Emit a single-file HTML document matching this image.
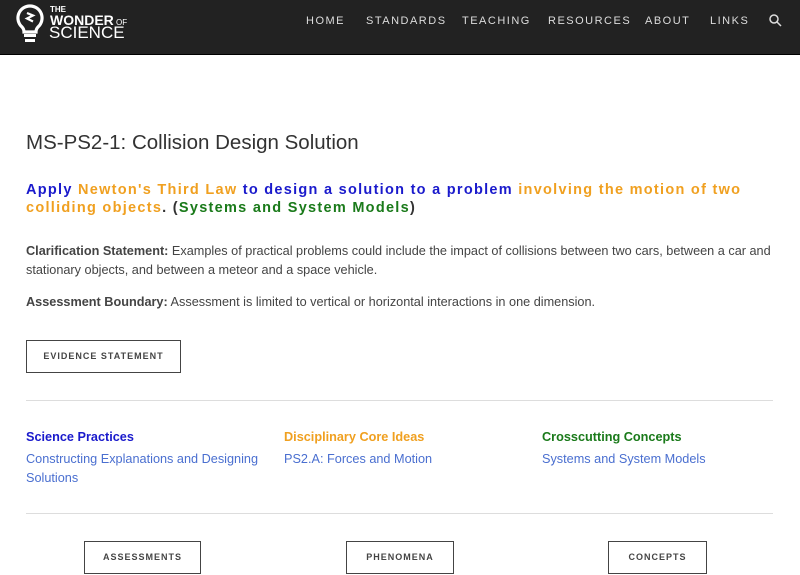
<!DOCTYPE html>
<html><head><style>
*{margin:0;padding:0;box-sizing:border-box}
body{width:800px;height:575px;overflow:hidden;background:#fff;font-family:"Liberation Sans",sans-serif;color:#333;position:relative}
.nav{position:absolute;left:0;top:0;width:800px;height:55px;background:#222;border-bottom:1px solid #000}
.nav .m{position:absolute;top:15px;color:#ddd;font-size:11px;letter-spacing:1.5px}
.a{position:absolute}
h1{position:absolute;left:26px;top:131px;font-size:20.5px;font-weight:normal;color:#333}
.big{position:absolute;left:26px;top:181px;font-size:14.5px;font-weight:bold;letter-spacing:1.28px;line-height:18px;width:770px}
.b{color:#1a1acc}.o{color:#f0a020}.g{color:#1a7a1a}
p{position:absolute;left:26px;font-size:12.7px;line-height:19px;width:760px;color:#444}
.btn{position:absolute;border:1.5px solid #444;font-size:9px;letter-spacing:1px;font-weight:bold;color:#444;text-align:center}
hr{position:absolute;left:26px;width:747px;border:0;border-top:1px solid #ddd}
.h{position:absolute;top:430px;font-size:12.7px;font-weight:bold}
.l{position:absolute;top:450px;font-size:12.7px;color:#4a6fd0;line-height:19px}
</style></head><body>
<div class="nav">
<svg class="a" style="left:14px;top:3px" width="32" height="40" viewBox="0 0 32 40"><path d="M16 3a12 12 0 0 0-8 21c1.5 1.5 2 3 2 5h12c0-2 .5-3.5 2-5A12 12 0 0 0 16 3z" fill="none" stroke="#fff" stroke-width="3.2"/><path d="M13 10l6 2.5-6 3 6 3" fill="none" stroke="#fff" stroke-width="2.2"/><rect x="10" y="31" width="12" height="3" fill="#fff"/><rect x="11" y="36" width="10" height="3" fill="#fff"/></svg>
<div class="a" style="left:50px;top:5px;color:#fff;font-size:8px;font-weight:bold">THE</div>
<div class="a" style="left:50px;top:12px;color:#fff;font-size:14px;font-weight:bold">WONDER<span style="font-size:8px;font-weight:normal"> OF</span></div>
<div class="a" style="left:49px;top:23px;color:#fff;font-size:17px">SCIENCE</div>
<span class="m" style="left:306px">HOME</span>
<span class="m" style="left:366px">STANDARDS</span>
<span class="m" style="left:462px">TEACHING</span>
<span class="m" style="left:548px">RESOURCES</span>
<span class="m" style="left:645px">ABOUT</span>
<span class="m" style="left:710px">LINKS</span>
<svg class="a" style="left:769px;top:14px" width="13" height="13"><circle cx="5" cy="5" r="4" fill="none" stroke="#ddd" stroke-width="1.5"/><path d="M8 8l4 4" stroke="#ddd" stroke-width="1.5"/></svg>
</div>
<h1>MS-PS2-1: Collision Design Solution</h1>
<div class="big"><span class="b">Apply </span><span class="o">Newton's Third Law </span><span class="b">to design a solution to a problem </span><span class="o">involving the motion of two colliding objects</span>. (<span class="g">Systems and System Models</span>)</div>
<p style="top:242px"><b>Clarification Statement:</b> Examples of practical problems could include the impact of collisions between two cars, between a car and stationary objects, and between a meteor and a space vehicle.</p>
<p style="top:293px"><b>Assessment Boundary:</b> Assessment is limited to vertical or horizontal interactions in one dimension.</p>
<div class="btn" style="left:26px;top:340px;width:155px;height:33px;line-height:31px">EVIDENCE STATEMENT</div>
<hr style="top:400px">
<div class="h b" style="left:26px">Science Practices</div>
<div class="h o" style="left:284px">Disciplinary Core Ideas</div>
<div class="h g" style="left:542px">Crosscutting Concepts</div>
<div class="l" style="left:26px;width:240px">Constructing Explanations and Designing Solutions</div>
<div class="l" style="left:284px">PS2.A: Forces and Motion</div>
<div class="l" style="left:542px">Systems and System Models</div>
<hr style="top:513px">
<div class="btn" style="left:84px;top:541px;width:117px;height:33px;line-height:31px">ASSESSMENTS</div>
<div class="btn" style="left:346px;top:541px;width:108px;height:33px;line-height:31px">PHENOMENA</div>
<div class="btn" style="left:608px;top:541px;width:99px;height:33px;line-height:31px">CONCEPTS</div>
</body></html>
